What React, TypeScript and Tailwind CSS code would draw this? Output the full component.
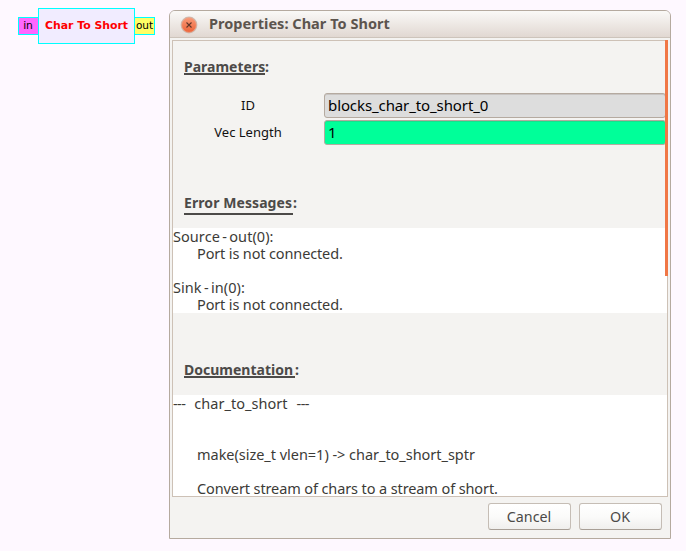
import React from 'react';

const sans = "font-['Noto_Sans','Open_Sans',sans-serif]";

function Heading({ children, className }: { children: string; className: string }) {
  return (
    <div className="flex h-5 pl-[11px] text-[14px] leading-5 font-bold text-[#4c4a48]">
      <span className={`${className} box-content shrink-0 border-b-2 border-[#4c4a48] whitespace-nowrap`}>{children}</span>
      <span>:</span>
    </div>
  );
}

function Field({ label, value, color }: { label: string; value: string; color: string }) {
  return (
    <div className="flex h-[25px] items-center">
      <div className="w-[151px] shrink-0 pr-px text-center text-[13px] text-[#111]">{label}</div>
      <div
        className={`${color} h-[25px] flex-1 rounded-[3px] border border-[#b5aaa0] pl-[3px] text-[15px] leading-[22px] tracking-[-0.1px] text-black shadow-[inset_0_1px_0_rgba(120,100,90,0.2)]`}
      >
        {value}
      </div>
    </div>
  );
}

function Line({ children, className = '' }: { children?: React.ReactNode; className?: string }) {
  return <div className={`${className} h-[17px] whitespace-pre`}>{children}</div>;
}

function Button({ children }: { children: string }) {
  return (
    <button className="flex h-[27px] w-[83px] items-center justify-center rounded-[3px] border border-[#c5bdb5] border-b-[#a89f96] bg-linear-to-b from-white via-[#fbfbfa] to-[#f0efed] pr-px text-[14.3px] text-[#4c4a48]">
      {children}
    </button>
  );
}

export default function App() {
  return (
    <div className={`${sans} flex h-[551px] w-[686px] overflow-hidden bg-[#fef8ff]`}>
      <div className="mt-2 mr-[18px] flex h-9 w-[151px] shrink-0 items-center pl-[18px] font-['DejaVu_Sans',sans-serif] text-[10.7px] text-black">
        <div className="flex h-[18px] w-[21px] shrink-0 items-center justify-center border border-[#00ffff] bg-[#ff66ff] pr-px">in</div>
        <div className="-ml-px flex h-9 w-[97px] shrink-0 items-center justify-center border border-[#00ffff] bg-[#f1ecff] text-[10.9px] font-bold whitespace-nowrap text-[#ff0000]">
          Char To Short
        </div>
        <div className="-ml-px flex h-[18px] w-[21px] shrink-0 items-center justify-center border border-[#00ffff] bg-[#ffff66] text-[10.5px]">out</div>
      </div>

      <div className="mt-[10px] flex h-[529px] w-[502px] shrink-0 flex-col rounded-t-[6px] border border-[#b5aa9f] bg-[#f4f3f1]">
        <div className="flex h-[27px] shrink-0 items-center rounded-t-[5px] border-b border-[#cdc4bb] bg-linear-to-b from-[#faf9f7] to-[#e1d8d2] pl-[9.5px]">
          <svg width="18" height="18" viewBox="0 0 18 18" className="mt-px shrink-0">
            <defs>
              <linearGradient id="close" x1="0" y1="0" x2="0" y2="1">
                <stop offset="0" stopColor="#f89a78" />
                <stop offset="1" stopColor="#ec6338" />
              </linearGradient>
            </defs>
            <circle cx="9" cy="9" r="8.4" fill="#c9beb5" />
            <circle cx="9" cy="9" r="7.4" fill="url(#close)" stroke="#e8a88f" strokeWidth="0.7" />
            <path d="M6.5 6.5l5 5M11.5 6.5l-5 5" stroke="#603629" strokeWidth="1.1" />
          </svg>
          <span className="ml-[11.5px] text-[14.5px] font-bold tracking-[0.03px] text-[#5c544e]">Properties: Char To Short</span>
        </div>

        <div className="mx-[2px] mt-[2px] flex h-[457px] shrink-0 border border-[#cdc1b6]">
          <div className="flex h-[455px] w-[492px] shrink-0 flex-col overflow-x-visible overflow-y-clip">
            <div className="pt-4">
              <Heading className="h-4 w-[81px]">Parameters</Heading>
            </div>
            <div className="mt-4 -mr-px flex flex-col gap-[2px]">
              <Field label="ID" value="blocks_char_to_short_0" color="bg-[#dddddd]" />
              <Field label="Vec Length" value="1" color="bg-[#00ff99]" />
            </div>
            <div className="mt-12">
              <Heading className="h-5 w-[109px] tracking-[0.08px]">Error Messages</Heading>
            </div>
            <div className="-mr-[2px] mt-[15px] h-[85px] shrink-0 bg-white text-[14.5px] leading-[17px] text-[#3c3b37]">
              <Line className="tracking-[0.06px] [word-spacing:-1.5px]">Source - out(0):</Line>
              <Line className="ml-6 tracking-[-0.14px]">Port is not connected.</Line>
              <Line />
              <Line className="tracking-[0.06px] [word-spacing:-1.5px]">Sink - in(0):</Line>
              <Line className="ml-6 tracking-[-0.14px]">Port is not connected.</Line>
            </div>
            <div className="mt-[47px]">
              <Heading className="h-4 w-[111px]">Documentation</Heading>
            </div>
            <div className="-mr-[2px] mt-[15px] h-[102px] shrink-0 bg-white text-[14.5px] leading-[17px] text-[#3c3b37]">
              <Line>
                <span className="tracking-[-0.6px]">---</span>
                <span className="ml-[9px] tracking-[0.04px]">char_to_short</span>
                <span className="ml-[9px] tracking-[-0.6px]">---</span>
              </Line>
              <Line />
              <Line />
              <Line className="ml-6 tracking-[-0.03px]">{'make(size_t vlen=1) -> char_to_short_sptr'}</Line>
              <Line />
              <Line className="ml-6 tracking-[-0.11px]">Convert stream of chars to a stream of short.</Line>
            </div>
          </div>
          <div className="z-10 -mt-px -mr-px h-[236px] w-[3px] shrink-0 bg-[#f07746]" />
        </div>

        <div className="mt-[6px] flex justify-end gap-2 pr-2">
          <Button>Cancel</Button>
          <Button>OK</Button>
        </div>
      </div>
    </div>
  );
}
